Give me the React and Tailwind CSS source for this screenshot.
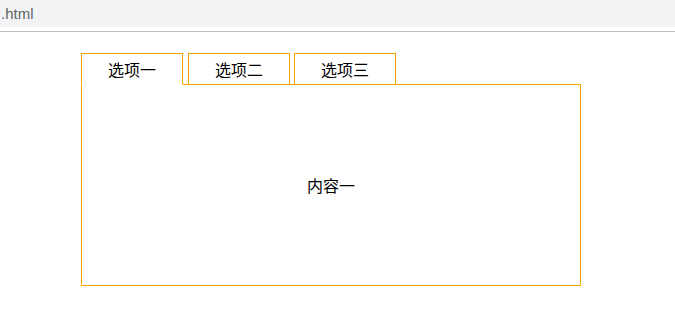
export default function App() {
  const font = { fontFamily: '"Noto Sans CJK SC", "Noto Sans", sans-serif' };
  return (
    <div className="w-[675px] h-[333px] bg-white overflow-hidden relative">
      <div className="h-[27px] bg-[#f1f3f4] flex items-center">
        <span className="ml-[1px] text-[15px] text-[#5f6368] leading-none" style={{ fontFamily: '"Liberation Sans", Arial, sans-serif' }}>.html</span>
      </div>
      <div className="h-[4px]" />
      <div className="h-px bg-[#bdbdbd]" />
      <div className="pl-[81px] pt-[21px]" style={font}>
        <div className="flex items-end">
          <div className="relative z-10 w-[102px] h-[32px] border border-[#ffa500] border-b-white bg-white flex items-center justify-center text-[16px] text-black">选项一</div>
          <div className="ml-[5px] w-[102px] h-[32px] border border-[#ffa500] bg-white flex items-center justify-center text-[16px] text-black">选项二</div>
          <div className="ml-[4px] w-[102px] h-[32px] border border-[#ffa500] bg-white flex items-center justify-center text-[16px] text-black">选项三</div>
        </div>
        <div className="-mt-px w-[500px] h-[202px] border border-[#ffa500] flex items-center justify-center text-[16px] text-black">内容一</div>
      </div>
    </div>
  );
}
